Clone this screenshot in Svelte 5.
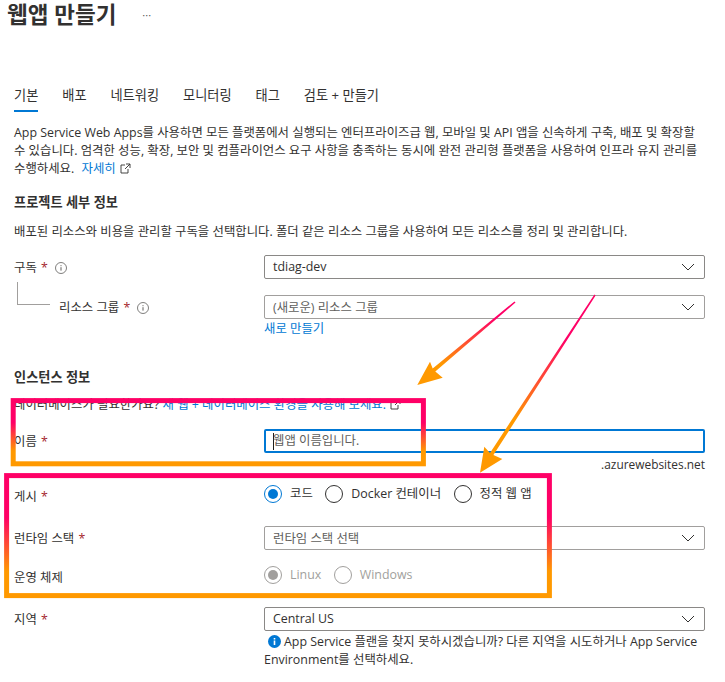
<script>
	const tabs = ['기본', '배포', '네트워킹', '모니터링', '태그', '검토 + 만들기'];
	const hosting = [
		{ label: '코드', checked: true },
		{ label: 'Docker 컨테이너' },
		{ label: '정적 웹 앱' }
	];
	const systems = [{ label: 'Linux', checked: true }, { label: 'Windows' }];
</script>

{#snippet chevron()}
	<svg class="chevron" width="14" height="8" viewBox="0 0 14 8"><path d="M1 1l6 6 6-6" fill="none" stroke="#323130" stroke-width="1" /></svg>
{/snippet}

{#snippet info()}
	<svg class="info" width="12" height="12" viewBox="0 0 12 12">
		<circle cx="6" cy="6" r="5.5" fill="none" stroke="#605e5c" stroke-width="0.8" />
		<path d="M6 5.2v3.4M6 3.2v1" stroke="#605e5c" stroke-width="1" />
	</svg>
{/snippet}

{#snippet external()}
	<svg class="ext" width="11" height="11" viewBox="0 0 11 11">
		<path d="M5 2H1v8h7V6M6 1h4v4M10 1L5 6" fill="none" stroke="#323130" stroke-width="0.9" />
	</svg>
{/snippet}

<div class="page">
	<div class="title-bar">
		<h1>웹앱 만들기</h1>
		<span class="more">···</span>
	</div>

	<div class="tabs">
		{#each tabs as tab, i}
			<span class="tab" class:active={i === 0}>{tab}</span>
		{/each}
	</div>

	<p class="intro">
		App Service Web Apps를 사용하면 모든 플랫폼에서 실행되는 엔터프라이즈급 웹, 모바일 및 API 앱을 신속하게 구축, 배포 및 확장할 수 있습니다. 엄격한 성능, 확장, 보안 및 컴플라이언스 요구 사항을 충족하는 동시에 완전 관리형 플랫폼을 사용하여 인프라 유지 관리를 수행하세요.
		<a class="more-link" href="#top">자세히</a>{@render external()}
	</p>

	<h2 class="project">프로젝트 세부 정보</h2>
	<p class="desc">배포된 리소스와 비용을 관리할 구독을 선택합니다. 폴더 같은 리소스 그룹을 사용하여 모든 리소스를 정리 및 관리합니다.</p>

	<div class="row sub">
		<div class="label">구독 <span class="req">*</span>{@render info()}</div>
		<div class="select"><span>tdiag-dev</span>{@render chevron()}</div>
	</div>
	<div class="row group">
		<div class="label nested"><i class="tree"></i>리소스 그룹 <span class="req">*</span>{@render info()}</div>
		<div>
			<div class="select muted"><span>(새로운) 리소스 그룹</span>{@render chevron()}</div>
			<a class="create" href="#top">새로 만들기</a>
		</div>
	</div>

	<h2 class="instance">인스턴스 정보</h2>
	<p class="db">데이터베이스가 필요한가요? <a href="#top">새 웹 + 데이터베이스 환경을 사용해 보세요.</a>{@render external()}</p>

	<div class="row name">
		<div class="label">이름 <span class="req">*</span></div>
		<div>
			<div class="input"><i class="caret"></i>웹앱 이름입니다.</div>
			<div class="suffix">.azurewebsites.net</div>
		</div>
	</div>

	<div class="row publish">
		<div class="label">게시 <span class="req">*</span></div>
		<div class="radios">
			{#each hosting as r}
				<span class="radio" class:checked={r.checked}><i></i>{r.label}</span>
			{/each}
		</div>
	</div>

	<div class="row stack">
		<div class="label">런타임 스택 <span class="req">*</span></div>
		<div class="select muted"><span>런타임 스택 선택</span>{@render chevron()}</div>
	</div>

	<div class="row os">
		<div class="label">운영 체제</div>
		<div class="radios disabled">
			{#each systems as r}
				<span class="radio" class:checked={r.checked}><i></i>{r.label}</span>
			{/each}
		</div>
	</div>

	<div class="row region">
		<div class="label">지역 <span class="req">*</span></div>
		<div>
			<div class="select"><span>Central US</span>{@render chevron()}</div>
			<p class="notice">
				<svg class="notice-icon" width="13" height="13" viewBox="0 0 13 13">
					<circle cx="6.5" cy="6.5" r="6.5" fill="#0078d4" />
					<path d="M6.5 5.6v4.4M6.5 3v1.5" stroke="#fff" stroke-width="1.6" />
				</svg>App Service 플랜을 찾지 못하시겠습니까? 다른 지역을 시도하거나 App Service Environment를 선택하세요.
			</p>
		</div>
	</div>

	<!-- annotations drawn on top of the screenshot -->
	<svg class="marks" width="725" height="682" viewBox="0 0 725 682">
		<defs>
			<linearGradient id="box" x1="0" y1="0" x2="0" y2="1">
				<stop offset="0.35" stop-color="#ff0066" />
				<stop offset="0.8" stop-color="#ff9900" />
			</linearGradient>
			<linearGradient id="arrow1" gradientUnits="userSpaceOnUse" x1="0" y1="302" x2="0" y2="385">
				<stop offset="0.2" stop-color="#ff0066" />
				<stop offset="0.75" stop-color="#ff9900" />
			</linearGradient>
			<linearGradient id="arrow2" gradientUnits="userSpaceOnUse" x1="0" y1="295" x2="0" y2="473">
				<stop offset="0.25" stop-color="#ff0066" />
				<stop offset="0.7" stop-color="#ff9900" />
			</linearGradient>
		</defs>
		<rect x="13.2" y="400.6" width="410.2" height="63.2" fill="none" stroke="url(#box)" stroke-width="5" />
		<rect x="6.6" y="475.6" width="542.8" height="120" fill="none" stroke="url(#box)" stroke-width="5" />
		<polygon fill="url(#arrow1)" points="514.5,301.4 515.5,302.6 435.3,371.5 442.7,377.7 417.3,385 430,361.7 432.7,368.5" />
		<polygon fill="url(#arrow2)" points="594.4,294.6 595.6,295.4 493.4,455.1 502.3,459 480,472.7 484.3,446.7 490,452.9" />
	</svg>
</div>

<style>
	:global(body) {
		margin: 0;
		background: #fff;
	}

	.page {
		position: relative;
		width: 725px;
		height: 682px;
		overflow: hidden;
		box-sizing: border-box;
		padding: 0 20px 0 14px;
		font-family: 'Open Sans', 'Noto Sans CJK KR', sans-serif;
		font-size: 12.4px;
		line-height: 18px;
		color: #323130;
	}

	a {
		color: #0078d4;
		text-decoration: none;
	}

	p {
		margin: 0;
	}

	h1 {
		margin: 0;
		font-size: 22.5px;
		line-height: 30px;
		font-weight: 600;
	}

	h2 {
		margin: 0;
		font-size: 13.2px;
		line-height: 18px;
		font-weight: 600;
	}

	.title-bar {
		display: flex;
		align-items: center;
		height: 30px;
		margin-left: -7px;
	}

	.more {
		margin-left: 26px;
		font-size: 11px;
		color: #605e5c;
	}

	.tabs {
		display: flex;
		gap: 24px;
		margin-top: 56px;
		height: 26px;
		font-size: 13.2px;
	}

	.tab {
		height: 26px;
		box-sizing: border-box;
		line-height: 18px;
	}

	.tab.active {
		border-bottom: 2px solid #0078d4;
	}

	.intro {
		margin-top: 12px;
	}

	.more-link {
		margin-left: 4px;
	}

	.ext {
		margin-left: 4px;
		vertical-align: -1px;
	}

	.project {
		margin-top: 15px;
	}

	.desc {
		margin-top: 12px;
	}

	.row {
		display: grid;
		grid-template-columns: 250px 1fr;
	}

	.label {
		line-height: 18px;
		padding-top: 4px;
	}

	.req {
		color: #a4262c;
		margin-left: 1px;
	}

	.info {
		margin-left: 7px;
		vertical-align: -2px;
	}

	.nested {
		position: relative;
		padding-left: 45px;
	}

	.tree {
		position: absolute;
		left: 3px;
		top: -13px;
		width: 32px;
		height: 22px;
		border-left: 1px solid #a19f9d;
		border-bottom: 1px solid #a19f9d;
	}

	.select,
	.input {
		display: flex;
		align-items: center;
		justify-content: space-between;
		box-sizing: border-box;
		height: 24px;
		padding: 0 8px;
		border: 1px solid #8a8886;
		border-radius: 2px;
	}

	.select.muted {
		color: #605e5c;
		border-color: #a19f9d;
	}

	.select.muted span {
		padding-top: 1px;
	}

	.chevron {
		margin-right: 1px;
	}

	.sub {
		margin-top: 14px;
	}

	.group {
		margin-top: 16px;
	}

	.create {
		display: block;
		margin-top: 1px;
	}

	.instance {
		margin-top: 30px;
	}

	.db {
		margin-top: 10px;
	}

	.name {
		margin-top: 15px;
	}

	.input {
		justify-content: flex-start;
		border: 2px solid #0078d4;
		padding: 0 7px;
		color: #605e5c;
	}

	.caret {
		width: 1px;
		height: 17px;
		margin-right: -1px;
		background: #201f1e;
	}

	.suffix {
		text-align: right;
		margin-top: 2px;
		font-size: 11.9px;
	}

	.publish {
		margin-top: 12px;
	}

	.publish .label {
		padding-top: 3px;
	}

	.radios {
		display: flex;
		height: 18px;
		align-items: center;
		white-space: nowrap;
		gap: 12.5px;
	}

	.radio {
		display: inline-flex;
		align-items: center;
		gap: 8px;
	}

	.radio i {
		position: relative;
		box-sizing: border-box;
		width: 18px;
		height: 18px;
		border: 1px solid #323130;
		border-radius: 50%;
	}

	.radio.checked i {
		border-color: #0078d4;
	}

	.radio.checked i::after {
		content: '';
		position: absolute;
		inset: 3px;
		border-radius: 50%;
		background: #0078d4;
	}

	.radios.disabled {
		color: #a19f9d;
	}

	.radios.disabled .radio i {
		border-color: #a19f9d;
	}

	.radios.disabled .radio.checked i::after {
		background: #a19f9d;
	}

	.stack {
		margin-top: 20px;
	}

	.os {
		margin-top: 16px;
	}

	.os .label {
		padding-top: 3px;
	}

	.region {
		margin-top: 20px;
	}

	.region .label {
		padding-top: 4px;
	}

	.notice {
		margin-top: 2px;
	}

	.notice-icon {
		margin: 0 3px 0 4px;
		vertical-align: -2px;
	}

	.marks {
		position: absolute;
		left: 0;
		top: 0;
		pointer-events: none;
	}
</style>
